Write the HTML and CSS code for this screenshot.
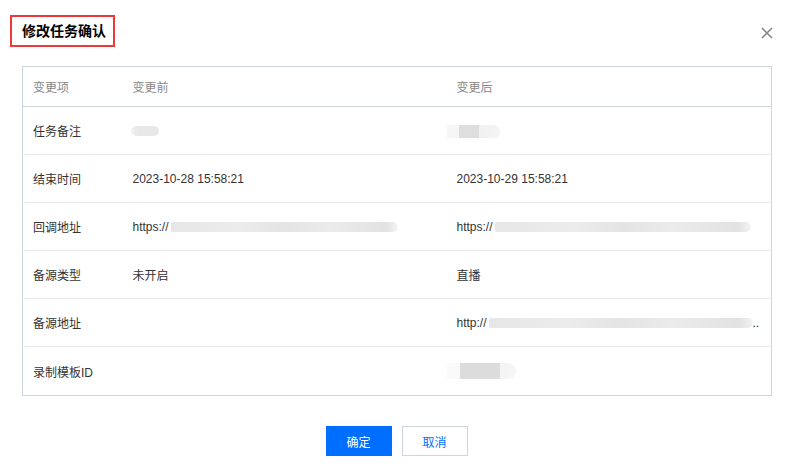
FILE: index.html
```html
<!DOCTYPE html>
<html lang="zh-CN">
<head>
    <meta charset="UTF-8">
    <title>修改任务确认</title>
    <link rel="stylesheet" href="styles.css">
</head>
<body>
    <div class="dialog">
        <div class="dialog-header">
            <h2 class="dialog-title">修改任务确认</h2>
            <span class="close-btn">
                <svg width="12" height="12" viewBox="0 0 12 12"><path d="M1 1 L11 11 M11 1 L1 11" stroke="#888" stroke-width="1.6" fill="none"/></svg>
            </span>
        </div>

        <table class="change-table">
            <colgroup>
                <col class="col-item">
                <col class="col-before">
                <col>
            </colgroup>
            <thead>
                <tr>
                    <th>变更项</th>
                    <th>变更前</th>
                    <th>变更后</th>
                </tr>
            </thead>
            <tbody>
                <tr>
                    <td>任务备注</td>
                    <td><span class="mask mask-lead" style="width: 28px"></span></td>
                    <td><span class="mask mask-dark mask-out" style="width: 57px"></span></td>
                </tr>
                <tr>
                    <td>结束时间</td>
                    <td>2023-10-28 15:58:21</td>
                    <td>2023-10-29 15:58:21</td>
                </tr>
                <tr>
                    <td>回调地址</td>
                    <td>https://<span class="mask mask-line" style="width: 227px"></span></td>
                    <td>https://<span class="mask mask-line" style="width: 256px"></span></td>
                </tr>
                <tr>
                    <td>备源类型</td>
                    <td>未开启</td>
                    <td>直播</td>
                </tr>
                <tr>
                    <td>备源地址</td>
                    <td></td>
                    <td>http://<span class="mask mask-line" style="width: 264px"></span>..</td>
                </tr>
                <tr>
                    <td>录制模板ID</td>
                    <td></td>
                    <td><span class="mask mask-tall mask-out" style="width: 73px"></span></td>
                </tr>
            </tbody>
        </table>

        <div class="dialog-footer">
            <button class="btn btn-primary">确定</button>
            <button class="btn btn-default">取消</button>
        </div>
    </div>
</body>
</html>
```

FILE: styles.css
```css
body {
    margin: 0;
    padding: 0;
    background-color: #fff;
    color: #333;
    font-family: "Liberation Sans", Arial, "Noto Sans CJK SC", sans-serif;
    font-size: 12px;
}

.dialog {
    width: 793px;
    height: 475px;
    box-sizing: border-box;
    padding: 15px 21px 0 10px;
}

/* Header */
.dialog-header {
    display: flex;
    justify-content: space-between;
    align-items: center;
    height: 32px;
}

.dialog-title {
    margin: 0;
    height: 32px;
    box-sizing: border-box;
    border: 2px solid #f0383a;
    padding: 0 7px 0 10px;
    font-size: 14px;
    font-weight: bold;
    line-height: 28px;
    color: #000;
}

.close-btn {
    display: flex;
    margin-top: 4px;
    margin-right: -1px;
}

/* Table */
.change-table {
    margin: 19px 0 0 12px;
    width: 750px;
    table-layout: fixed;
    border-collapse: collapse;
    border: 1px solid #cfd5de;
}

.col-item {
    width: 100px;
}

.col-before {
    width: 324px;
}

.change-table th,
.change-table td {
    padding: 0 10px;
    text-align: left;
    white-space: nowrap;
    overflow: hidden;
}

.change-table th {
    height: 39px;
    font-weight: normal;
    color: #888;
    border-bottom: 1px solid #cfd5de;
}

.change-table td {
    height: 47px;
    color: #333;
    border-bottom: 1px solid #e5e8ed;
}

.change-table tbody tr:last-child td {
    border-bottom: none;
    height: 48px;
}

/* blurred values */
.mask {
    display: inline-block;
    height: 10px;
    vertical-align: middle;
    border-radius: 5px;
    background: linear-gradient(90deg, #f3f3f3 0%, #e8e8e8 25%, #e8e8e8 100%);
    filter: blur(0.6px);
}

.mask-lead {
    margin-left: -2px;
}

.mask-out {
    margin-left: -14px;
}

.mask-dark {
    height: 13px;
    border-radius: 2px 6px 6px 2px;
    background: linear-gradient(90deg, #f6f6f6 0%, #f6f6f6 28%, #dedede 28%, #dedede 64%, #f1f1f1 64%, #f4f4f4 100%);
}

.mask-tall {
    height: 16px;
    border-radius: 2px 8px 8px 2px;
    background: linear-gradient(90deg, #fafafa 0%, #fafafa 23%, #dcdcdc 23%, #dcdcdc 78%, #f4f4f4 78%, #f6f6f6 100%);
}

.mask-line {
    margin-left: 2px;
    border-radius: 2px 5px 5px 2px;
    background: linear-gradient(90deg, #e6e6e6 0%, #ececec 30%, #e4e4e4 50%, #ebebeb 70%, #e2e2e2 95%, #f4f4f4 100%);
}

/* Footer */
.dialog-footer {
    display: flex;
    justify-content: center;
    gap: 10px;
    margin-top: 30px;
    padding-left: 11px;
}

.btn {
    width: 66px;
    height: 30px;
    font-family: inherit;
    font-size: 12px;
    cursor: pointer;
    box-sizing: border-box;
}

.btn-primary {
    background-color: #006eff;
    border: 1px solid #006eff;
    color: #fff;
}

.btn-default {
    background-color: #fff;
    border: 1px solid #cfd5de;
    color: #006eff;
}
```
